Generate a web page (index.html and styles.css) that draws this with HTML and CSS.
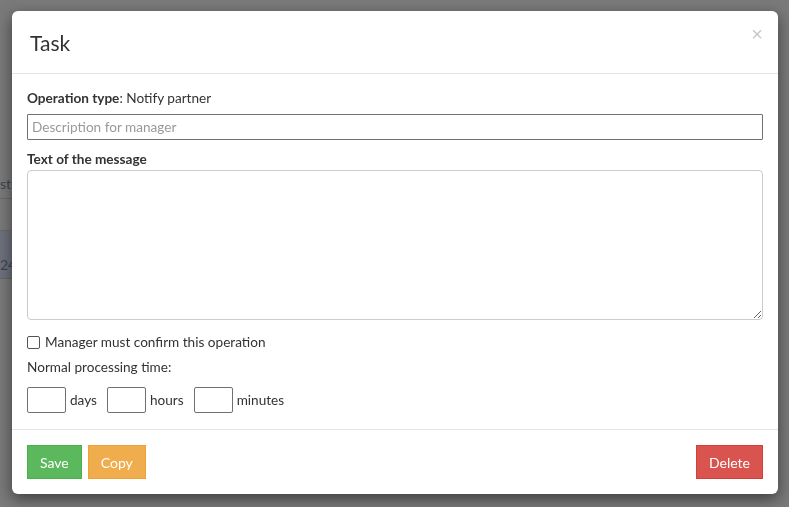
FILE: index.html
```html
<!DOCTYPE html>
<html>
<head>
<meta charset="utf-8">
<link rel="stylesheet" href="styles.css">
</head>
<body>
<div class="page">
  <div class="page-row first"><span class="page-text">st</span></div>
  <div class="page-row gap"></div>
  <div class="page-row tint"><span class="page-text">24</span></div>
</div>
<div class="overlay">
  <div class="modal">
    <div class="modal-header">
      <h4 class="modal-title">Task</h4>
      <span class="close">×</span>
    </div>
    <div class="modal-body">
      <div class="line"><b>Operation type</b>: Notify partner</div>
      <input class="desc" type="text" placeholder="Description for manager">
      <div class="line label"><b>Text of the message</b></div>
      <textarea class="msg"></textarea>
      <label class="check"><span class="box"></span>Manager must confirm this operation</label>
      <div class="line normal">Normal processing time:</div>
      <div class="times">
        <input class="small" type="text"><span class="unit">days</span>
        <input class="small" type="text"><span class="unit">hours</span>
        <input class="small" type="text"><span class="unit">minutes</span>
      </div>
    </div>
    <div class="modal-footer">
      <button class="btn save">Save</button>
      <button class="btn copy">Copy</button>
      <span class="spacer"></span>
      <button class="btn del">Delete</button>
    </div>
  </div>
</div>
</body>
</html>
```
FILE: styles.css
```css
html, body {
  margin: 0;
  padding: 0;
  height: 100%;
}
body {
  background: #7a7a7a;
  font-family: Lato, "Open Sans", sans-serif;
  font-size: 13.6px;
  color: #333;
  overflow: hidden;
}
.page {
  padding-top: 168px;
  width: 40px;
}
.page-row {
  display: flex;
  align-items: center;
  color: #3e4450;
  font-size: 14px;
}
.page-row.first {
  height: 30px;
  border-bottom: 1px solid #6a6a6a;
}
.page-row.gap {
  height: 31px;
  border-bottom: 1px solid #6a6a6a;
}
.page-row.tint {
  background: #6e727c;
  border-bottom: 1px solid #666;
  padding-top: 20px;
  box-sizing: border-box;
  height: 48px;
}
.page-text {
  margin-left: 0;
}
.overlay {
  position: fixed;
  inset: 0;
}
.modal {
  position: absolute;
  left: 12px;
  top: 11px;
  width: 766px;
  height: 483px;
  background: #fff;
  border-radius: 6px;
  box-shadow: 0 5px 15px rgba(0, 0, 0, 0.5);
  display: flex;
  flex-direction: column;
}
.modal-header {
  height: 62px;
  border-bottom: 1px solid #e5e5e5;
  padding: 0 15px 0 18px;
  display: flex;
  align-items: center;
  justify-content: space-between;
}
.modal-title {
  margin: 0;
  font-size: 21px;
  font-weight: 400;
  color: #333;
}
.close {
  color: #c8c8c8;
  font-size: 20px;
  line-height: 1;
  align-self: flex-start;
  margin-top: 13px;
  font-family: "Liberation Sans", sans-serif;
}
.modal-body {
  padding: 14px 15px 0 15px;
  display: flex;
  flex-direction: column;
  flex: 1;
}
.line {
  line-height: 20px;
}
.line b {
  font-weight: 700;
}
.desc {
  margin-top: 6px;
  height: 26px;
  box-sizing: border-box;
  border: 1px solid #707070;
  border-radius: 1px;
  padding: 0 4px;
  font-family: inherit;
  font-size: 13.6px;
  color: #333;
  outline: none;
}
.desc::placeholder {
  color: #999;
}
.label {
  margin-top: 9px;
}
.msg {
  margin-top: 1px;
  height: 150px;
  box-sizing: border-box;
  border: 1px solid #ccc;
  border-radius: 4px;
  resize: vertical;
  font-family: inherit;
  outline: none;
}
.check {
  margin-top: 12px;
  display: flex;
  align-items: center;
  line-height: 20px;
}
.box {
  width: 11px;
  height: 11px;
  border: 1px solid #555;
  border-radius: 2px;
  margin-right: 5px;
  background: #fff;
}
.normal {
  margin-top: 5px;
}
.times {
  margin-top: 10px;
  display: flex;
  align-items: center;
}
.small {
  width: 39px;
  height: 26px;
  box-sizing: border-box;
  border: 1px solid #707070;
  border-radius: 2px;
  padding: 0;
  outline: none;
}
.unit {
  margin-left: 4px;
  margin-right: 10px;
}
.modal-footer {
  border-top: 1px solid #e5e5e5;
  padding: 15px;
  display: flex;
  gap: 6px;
}
.spacer {
  flex: 1;
}
.btn {
  height: 34px;
  padding: 0 12px;
  font-family: inherit;
  font-size: 14px;
  color: #fff;
  border: 1px solid transparent;
  border-radius: 0;
}
.save {
  background: #5cb85c;
  border-color: #4cae4c;
}
.copy {
  background: #f0ad4e;
  border-color: #eea236;
}
.del {
  background: #d9534f;
  border-color: #d43f3a;
}
```
